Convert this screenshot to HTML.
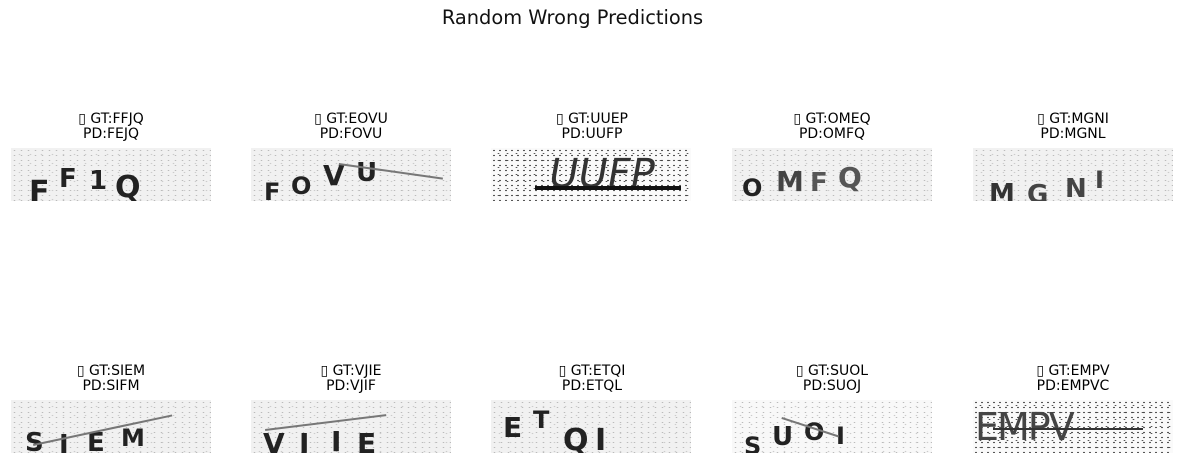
<!DOCTYPE html>
<html><head><style>
body{margin:0;width:1182px;height:463px;background:#fff;position:relative;overflow:hidden;font-family:"DejaVu Sans","Liberation Sans",sans-serif}
.sup{position:absolute;top:6px;left:0;width:1145px;text-align:center;font-size:19.4px;color:#111}
.t{position:absolute;width:240px;text-align:center;font-size:14px;line-height:15px;color:#000}
.im{position:absolute;width:200px;height:53px;overflow:hidden;background:#f1f1f1;
background-image:radial-gradient(#bbb 0.6px,transparent 1px),radial-gradient(#ccc 0.6px,transparent 1px);background-size:7px 5px,11px 9px;background-position:0 0,3px 2px}
.im span{position:absolute;font-family:"DejaVu Sans",sans-serif;color:#222;font-size:30px;line-height:1;font-weight:bold}
.im i{position:absolute;height:2px;background:#777;transform-origin:0 0}
.dk{background-color:#fafafa;background-image:radial-gradient(#333 0.7px,transparent 1px),radial-gradient(#555 0.7px,transparent 1px);background-size:6px 5px,9px 7px}
</style></head><body>
<div class="sup">Random Wrong Predictions</div>

<div class="t" style="left:-9px;top:112px">▯ GT:FFJQ<br>PD:FEJQ</div>
<div class="t" style="left:231px;top:112px">▯ GT:EOVU<br>PD:FOVU</div>
<div class="t" style="left:472px;top:112px">▯ GT:UUEP<br>PD:UUFP</div>
<div class="t" style="left:712px;top:112px">▯ GT:OMEQ<br>PD:OMFQ</div>
<div class="t" style="left:953px;top:112px">▯ GT:MGNI<br>PD:MGNL</div>

<div class="t" style="left:-9px;top:364px">▯ GT:SIEM<br>PD:SIFM</div>
<div class="t" style="left:231px;top:364px">▯ GT:VJIE<br>PD:VJIF</div>
<div class="t" style="left:472px;top:364px">▯ GT:ETQI<br>PD:ETQL</div>
<div class="t" style="left:712px;top:364px">▯ GT:SUOL<br>PD:SUOJ</div>
<div class="t" style="left:953px;top:364px">▯ GT:EMPV<br>PD:EMPVC</div>

<div class="im" style="left:11px;top:148px"><span style="left:18px;top:30px">F</span><span style="left:48px;top:18px;font-size:26px">F</span><span style="left:78px;top:20px;font-size:26px">1</span><span style="left:104px;top:25px">Q</span></div>
<div class="im" style="left:251px;top:148px"><span style="left:13px;top:32px;font-size:24px">F</span><span style="left:40px;top:26px;font-size:24px">O</span><span style="left:72px;top:14px;font-size:28px">V</span><span style="left:105px;top:12px;font-size:26px">U</span><i style="left:88px;top:15px;width:105px;transform:rotate(8deg)"></i></div>
<div class="im dk" style="left:491px;top:148px"><span style="left:58px;top:6px;font-size:40px;color:#333;font-weight:normal;transform:skewX(-10deg)">UUFP</span><i style="left:44px;top:38px;width:146px;height:4px;background:#111"></i></div>
<div class="im" style="left:732px;top:148px"><span style="left:10px;top:28px;font-size:24px">O</span><span style="left:44px;top:20px;font-size:28px;color:#444">M</span><span style="left:78px;top:22px;font-size:26px;color:#555">F</span><span style="left:106px;top:16px;font-size:28px;color:#555">Q</span></div>
<div class="im" style="left:973px;top:148px"><span style="left:16px;top:33px;font-size:26px;color:#333">M</span><span style="left:54px;top:34px;font-size:26px;color:#444">G</span><span style="left:92px;top:28px;font-size:26px;color:#444">N</span><span style="left:122px;top:20px;font-size:24px;color:#444">I</span></div>

<div class="im" style="left:11px;top:400px"><span style="left:14px;top:30px;font-size:26px">S</span><span style="left:48px;top:32px;font-size:26px">I</span><span style="left:76px;top:30px;font-size:26px">E</span><span style="left:110px;top:26px;font-size:24px">M</span><i style="left:22px;top:44px;width:142px;transform:rotate(-12deg)"></i></div>
<div class="im" style="left:251px;top:400px"><span style="left:12px;top:30px;font-size:28px">V</span><span style="left:48px;top:30px;font-size:28px">J</span><span style="left:80px;top:28px;font-size:28px">I</span><span style="left:106px;top:30px;font-size:28px">E</span><i style="left:14px;top:29px;width:122px;transform:rotate(-7deg)"></i></div>
<div class="im" style="left:491px;top:400px"><span style="left:12px;top:14px;font-size:28px">E</span><span style="left:42px;top:8px;font-size:24px">T</span><span style="left:72px;top:26px;font-size:30px">Q</span><span style="left:104px;top:26px;font-size:30px">I</span></div>
<div class="im" style="left:732px;top:400px;background-color:#f8f8f8"><span style="left:12px;top:34px;font-size:24px">S</span><span style="left:40px;top:24px;font-size:26px">U</span><span style="left:72px;top:20px;font-size:24px">O</span><span style="left:104px;top:24px;font-size:24px">I</span><i style="left:50px;top:17px;width:60px;transform:rotate(18deg)"></i></div>
<div class="im dk" style="left:973px;top:400px"><span style="left:2px;top:8px;font-size:38px;color:#444;font-weight:normal;letter-spacing:-2px">EMPV</span><i style="left:20px;top:28px;width:150px;height:2px;background:#333"></i></div>
</body></html>
